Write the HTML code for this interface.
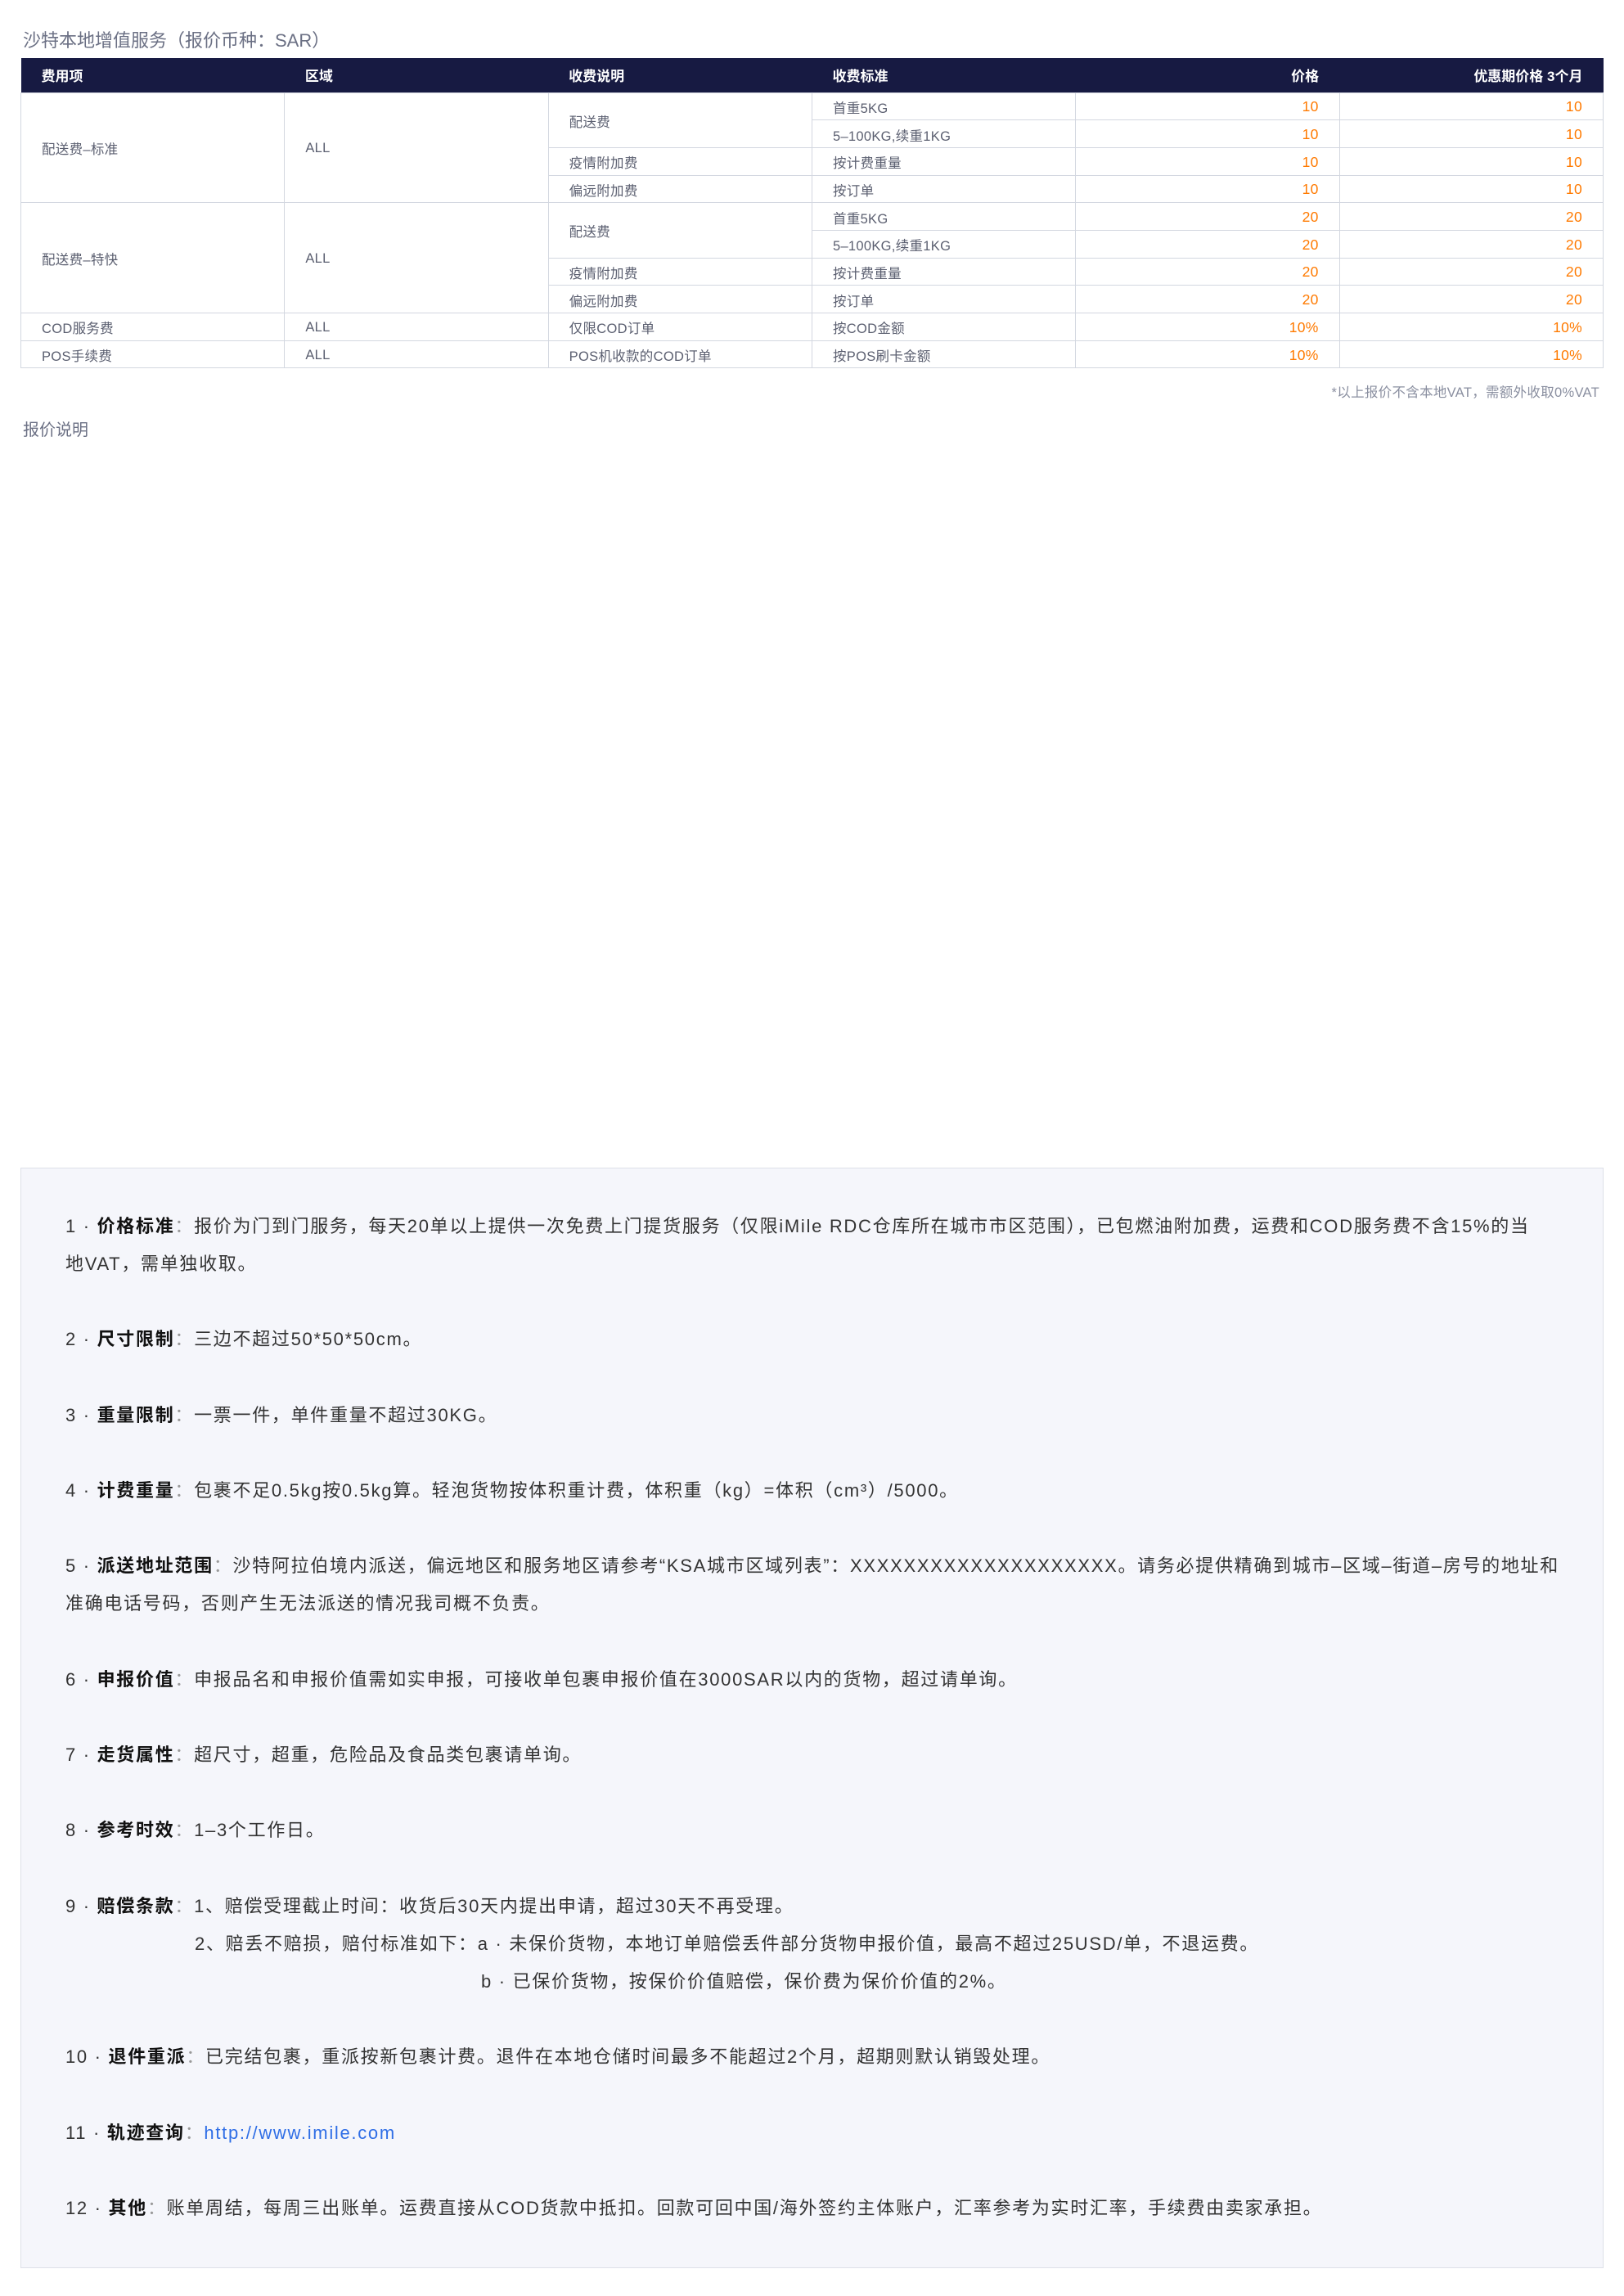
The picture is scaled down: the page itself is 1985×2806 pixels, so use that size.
<!DOCTYPE html>
<html><head><meta charset="utf-8"><style>
*{margin:0;padding:0;box-sizing:border-box}
body{width:1985px;height:2806px;background:#fff;font-family:"Liberation Sans","Noto Sans CJK SC",sans-serif;position:relative;overflow:hidden}
.title{position:absolute;left:28px;top:32px;font-size:22px;color:#6b7084}
table{position:absolute;left:25px;top:71px;width:1935px;border-collapse:collapse;table-layout:fixed}
th{background:#171a42;color:#fff;font-weight:bold;font-size:17px;height:42px;text-align:left;padding:0 25px}
td{border:1.5px solid #d3d7e0;height:33.7px;font-size:16.5px;color:#5b5f70;padding:2px 25px 0;text-align:left;letter-spacing:0.3px}
.r{text-align:right}
td.n{color:#ff7a00;text-align:right;font-size:17.5px}
.foot{position:absolute;right:30px;top:466px;font-size:16.5px;color:#8a8fa0;letter-spacing:0.3px}
.sub{position:absolute;left:28px;top:509px;font-size:20px;color:#6b7084}
.panel{position:absolute;left:25px;top:1427px;width:1935px;height:1345px;background:#f5f6fb;border:1.5px solid #dde0e8}
.panel p{position:absolute;left:54px;font-size:22px;color:#333;line-height:46px;white-space:nowrap;letter-spacing:1.7px}
.panel b{color:#111}
.k{color:#999}
a{color:#2f6ee6;text-decoration:none}
</style></head><body>
<div class="title">沙特本地增值服务（报价币种：SAR）</div>
<table>
<tr><th>费用项</th><th>区域</th><th>收费说明</th><th>收费标准</th><th class="r">价格</th><th class="r">优惠期价格 3个月</th></tr>
<tr><td rowspan="4">配送费–标准</td><td rowspan="4">ALL</td><td rowspan="2">配送费</td><td>首重5KG</td><td class="n">10</td><td class="n">10</td></tr>
<tr><td>5–100KG,续重1KG</td><td class="n">10</td><td class="n">10</td></tr>
<tr><td>疫情附加费</td><td>按计费重量</td><td class="n">10</td><td class="n">10</td></tr>
<tr><td>偏远附加费</td><td>按订单</td><td class="n">10</td><td class="n">10</td></tr>
<tr><td rowspan="4">配送费–特快</td><td rowspan="4">ALL</td><td rowspan="2">配送费</td><td>首重5KG</td><td class="n">20</td><td class="n">20</td></tr>
<tr><td>5–100KG,续重1KG</td><td class="n">20</td><td class="n">20</td></tr>
<tr><td>疫情附加费</td><td>按计费重量</td><td class="n">20</td><td class="n">20</td></tr>
<tr><td>偏远附加费</td><td>按订单</td><td class="n">20</td><td class="n">20</td></tr>
<tr><td>COD服务费</td><td>ALL</td><td>仅限COD订单</td><td>按COD金额</td><td class="n">10%</td><td class="n">10%</td></tr>
<tr><td>POS手续费</td><td>ALL</td><td>POS机收款的COD订单</td><td>按POS刷卡金额</td><td class="n">10%</td><td class="n">10%</td></tr>
</table>
<div class="foot">*以上报价不含本地VAT，需额外收取0%VAT</div>
<div class="sub">报价说明</div>
<div class="panel">
<p style="top:48px">1 · <b>价格标准</b><span class="k">：</span>报价为门到门服务，每天20单以上提供一次免费上门提货服务（仅限iMile RDC仓库所在城市市区范围），已包燃油附加费，运费和COD服务费不含15%的当</p>
<p style="top:94px">地VAT，需单独收取。</p>
<p style="top:186px">2 · <b>尺寸限制</b><span class="k">：</span>三边不超过50*50*50cm。</p>
<p style="top:279px">3 · <b>重量限制</b><span class="k">：</span>一票一件，单件重量不超过30KG。</p>
<p style="top:371px">4 · <b>计费重量</b><span class="k">：</span>包裹不足0.5kg按0.5kg算。轻泡货物按体积重计费，体积重（kg）=体积（cm³）/5000。</p>
<p style="top:463px">5 · <b>派送地址范围</b><span class="k">：</span>沙特阿拉伯境内派送，偏远地区和服务地区请参考“KSA城市区域列表”：XXXXXXXXXXXXXXXXXXXX。请务必提供精确到城市–区域–街道–房号的地址和</p>
<p style="top:509px">准确电话号码，否则产生无法派送的情况我司概不负责。</p>
<p style="top:602px">6 · <b>申报价值</b><span class="k">：</span>申报品名和申报价值需如实申报，可接收单包裹申报价值在3000SAR以内的货物，超过请单询。</p>
<p style="top:694px">7 · <b>走货属性</b><span class="k">：</span>超尺寸，超重，危险品及食品类包裹请单询。</p>
<p style="top:786px">8 · <b>参考时效</b><span class="k">：</span>1–3个工作日。</p>
<p style="top:879px">9 · <b>赔偿条款</b><span class="k">：</span>1、赔偿受理截止时间：收货后30天内提出申请，超过30天不再受理。</p>
<p style="top:925px;left:212px">2、赔丢不赔损，赔付标准如下：a · 未保价货物，本地订单赔偿丢件部分货物申报价值，最高不超过25USD/单，不退运费。</p>
<p style="top:971px;left:562px">b · 已保价货物，按保价价值赔偿，保价费为保价价值的2%。</p>
<p style="top:1063px">10 · <b>退件重派</b><span class="k">：</span>已完结包裹，重派按新包裹计费。退件在本地仓储时间最多不能超过2个月，超期则默认销毁处理。</p>
<p style="top:1156px">11 · <b>轨迹查询</b><span class="k">：</span><a>http://www.imile.com</a></p>
<p style="top:1248px">12 · <b>其他</b><span class="k">：</span>账单周结，每周三出账单。运费直接从COD货款中抵扣。回款可回中国/海外签约主体账户，汇率参考为实时汇率，手续费由卖家承担。</p>
</div>
</body></html>
